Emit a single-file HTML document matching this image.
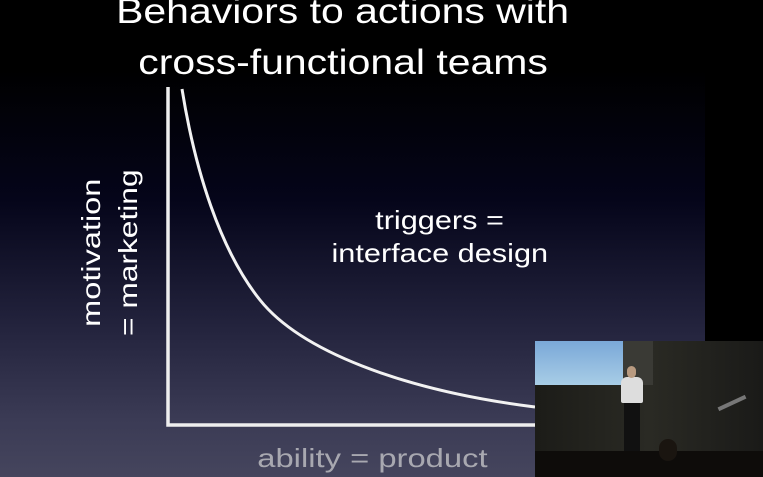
<!DOCTYPE html>
<html><head><style>
html,body{margin:0;padding:0}
body{width:763px;height:477px;overflow:hidden;position:relative;background:#000;font-family:"Liberation Sans",sans-serif}
.slide{position:absolute;left:0;top:0;width:705px;height:477px;background:linear-gradient(#000 0px,#000 70px,#05051a 200px,#24243e 330px,#3b3b55 420px,#45455d 477px)}
.t{position:absolute;color:#fff;white-space:nowrap;text-align:center}
.t span{display:inline-block}
</style></head><body>
<div class="slide"></div>
<div class="t" style="left:0;width:686px;top:-9px;font-size:35px;line-height:42px"><span style="transform:scaleX(1.17)">Behaviors to actions with</span></div>
<div class="t" style="left:0;width:686px;top:42px;font-size:35px;line-height:42px"><span style="transform:scaleX(1.17)">cross-functional teams</span></div>
<svg style="position:absolute;left:0;top:0" width="763" height="477">
<path d="M168 87 L168 425 L540 425" fill="none" stroke="#eee" stroke-width="3.5"/>
<path d="M182 89 C195 170, 220 250, 260 300 C300 350, 400 390, 535 407" fill="none" stroke="#f2f2f2" stroke-width="3"/>
</svg>
<div class="t" style="left:300px;width:280px;top:204px;font-size:26px;line-height:33px"><span style="transform:scaleX(1.18)">triggers =</span><br><span style="transform:scaleX(1.18)">interface design</span></div>
<div class="t" style="left:-20px;top:216px;width:260px;font-size:26px;line-height:37px;transform:rotate(-90deg);transform-origin:130px 37px;"><span style="transform:scaleX(1.25)">motivation</span><br><span style="transform:scaleX(1.22)">= marketing</span></div>
<div class="t" style="left:200px;width:345px;top:442px;font-size:26px;color:#a8a8b0;line-height:32px"><span style="transform:scaleX(1.26)">ability = product</span></div>
<div style="position:absolute;left:535px;top:341px;width:228px;height:136px;background:linear-gradient(90deg,#1c1c18,#2a2a24 50%,#1a1a18)">
 <div style="position:absolute;left:0;top:0;width:88px;height:44px;background:linear-gradient(#7aa8d8,#a8cde6)"></div>
 <div style="position:absolute;left:88px;top:0;width:30px;height:44px;background:#3a3a35"></div>
 <div style="position:absolute;left:86px;top:36px;width:22px;height:26px;background:#ddd;border-radius:6px 6px 2px 2px"></div>
 <div style="position:absolute;left:92px;top:25px;width:9px;height:12px;background:#b89a80;border-radius:5px"></div>
 <div style="position:absolute;left:89px;top:62px;width:16px;height:50px;background:#111"></div>
 <div style="position:absolute;left:0;top:110px;width:228px;height:26px;background:#0e0c0a"></div>
 <div style="position:absolute;left:124px;top:98px;width:18px;height:22px;background:#1a1510;border-radius:9px"></div>
 <div style="position:absolute;left:182px;top:60px;width:30px;height:4px;background:#777;transform:rotate(-25deg)"></div>
</div>
</body></html>
